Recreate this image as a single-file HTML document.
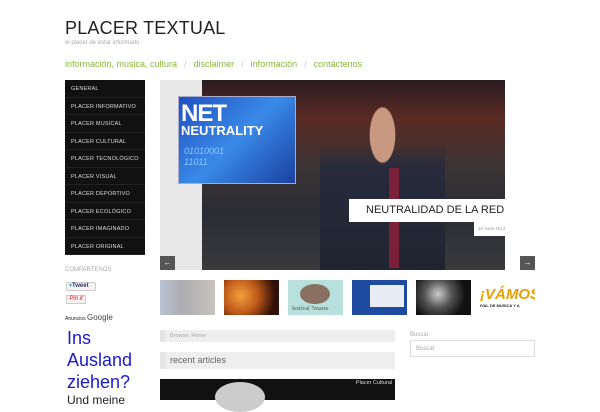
<!DOCTYPE html>
<html><head><meta charset="utf-8"><style>
*{margin:0;padding:0;box-sizing:border-box}
body{width:600px;height:400px;overflow:hidden;background:#fff;font-family:"Liberation Sans","DejaVu Sans",sans-serif;position:relative}
.a{position:absolute;white-space:nowrap}
#title{left:65px;top:18px;font-size:18px;color:#222;letter-spacing:0.2px}
#tag{left:65px;top:40px;font-size:6px;color:#aaa}
#nav{left:65px;top:59px;font-size:9px;color:#8ab83c;white-space:nowrap}
#nav span{color:#ccc;margin:0 7px}
#menu{left:65px;top:80px;width:80px;height:175px;background:#111}
#menu div{height:17.5px;border-bottom:1px solid #222;color:#ddd;font-size:5.5px;padding:6px 0 0 6px;letter-spacing:.2px}
.thumb{top:280px;width:55px;height:35px}
</style></head><body>
<div class="a" id="title">PLACER TEXTUAL</div>
<div class="a" id="tag">el placer de estar informado</div>
<div class="a" id="nav">información, musica, cultura<span>/</span>disclaimer<span>/</span>información<span>/</span>contáctenos</div>
<div class="a" id="menu"><div>GENERAL</div><div>PLACER INFORMATIVO</div><div>PLACER MUSICAL</div><div>PLACER CULTURAL</div><div>PLACER TECNOLÓGICO</div><div>PLACER VISUAL</div><div>PLACER DEPORTIVO</div><div>PLACER ECOLÓGICO</div><div>PLACER IMAGINADO</div><div>PLACER ORIGINAL</div></div>
<div class="a" style="left:65px;top:267px;font-size:6px;color:#aaa">COMPARTENOS</div>
<div class="a" style="left:66px;top:282px;width:30px;height:9px;border:1px solid #ccc;border-radius:2px;background:#f4f4f4;font-size:6px;font-weight:bold;color:#336;padding-left:2px;line-height:7px"><span style="color:#3a9ee0">▾</span>Tweet</div>
<div class="a" style="left:66px;top:295px;width:20px;height:9px;border:1px solid #ccc;background:#f6f0f0;font-size:6px;color:#c22;font-style:italic;text-align:center;line-height:7px">Pin it</div>
<div class="a" style="left:65px;top:313px;font-size:5px;color:#222">Anuncios <span style="font-size:8px;color:#444">Google</span></div>
<div class="a" style="left:67px;top:327px;font-size:18px;line-height:22px;color:#1a1ad0">Ins<br>Ausland<br>ziehen?</div>
<div class="a" style="left:67px;top:393px;font-size:12px;color:#222">Und meine</div>
<!-- slider -->
<div class="a" style="left:160px;top:80px;width:345px;height:190px;background:linear-gradient(180deg,#2a1c20 0%,#5a2a24 20%,#3c3434 45%,#2a2c34 70%,#3a3a3c 100%)"></div>
<div class="a" style="left:160px;top:80px;width:42px;height:190px;background:#e8e8e8"></div>
<div class="a" style="left:320px;top:90px;width:125px;height:180px;background:radial-gradient(ellipse at 50% 25%,#c99880 0 14%,transparent 15%),linear-gradient(180deg,transparent 30%,#262a3c 45%,#202430 100%);border-radius:40px 40px 0 0"></div>
<div class="a" style="left:389px;top:168px;width:10px;height:100px;background:#7a2038"></div>
<div class="a" style="left:178px;top:96px;width:118px;height:88px;background:linear-gradient(135deg,#2050c0,#3a8ae8 50%,#1a40a0);border:1px solid #aac"></div>
<div class="a" style="left:181px;top:100px;font-size:24px;font-weight:bold;color:#fff;letter-spacing:-1px">NET</div>
<div class="a" style="left:181px;top:123px;font-size:13px;font-weight:bold;color:#fff">NEUTRALITY</div>
<div class="a" style="left:184px;top:146px;font-size:9px;color:#8cc8ff;line-height:11px;font-style:italic">01010001<br>11011</div>
<div class="a" style="left:349px;top:199px;width:156px;height:23px;background:#fff;font-size:11px;color:#222;padding:5px 0 0 17px;overflow:hidden">NEUTRALIDAD DE LA RED</div>
<div class="a" style="left:474px;top:222px;width:31px;height:14px;background:#fff;font-size:4.5px;color:#999;padding:4px 0 0 4px;overflow:hidden">10 June 2014</div>
<div class="a" style="left:160px;top:256px;width:15px;height:14px;background:#555;color:#fff;font-size:8px;text-align:center;line-height:14px">←</div>
<div class="a" style="left:520px;top:256px;width:15px;height:14px;background:#555;color:#fff;font-size:8px;text-align:center;line-height:14px">→</div>
<!-- thumbs -->
<div class="a thumb" style="left:160px;background:linear-gradient(90deg,#9aa8c0,#8a8a90 40%,#b0a8a0);opacity:.7"></div>
<div class="a thumb" style="left:224px;background:radial-gradient(circle at 30% 45%,#f0a040,#c05a18 40%,#301008 80%)"></div>
<div class="a thumb" style="left:288px;background:#b8e0dc"><div style="position:absolute;left:12px;top:4px;width:30px;height:20px;background:#8a7060;border-radius:50%"></div><div style="position:absolute;left:4px;top:26px;font-size:6px;color:#553;font-family:'Liberation Serif',serif">festival 7mares</div></div>
<div class="a thumb" style="left:352px;background:#1e4aa0"><div style="position:absolute;left:18px;top:5px;width:34px;height:22px;background:#e8ecf4"></div></div>
<div class="a thumb" style="left:416px;background:radial-gradient(circle at 40% 40%,#ccc,#555 35%,#111 70%)"></div>
<div class="a thumb" style="left:480px;background:#fff;overflow:hidden"><div style="font-size:15px;font-weight:bold;color:#e8a000;font-style:italic;margin-top:6px;white-space:nowrap">¡VÁMOS</div><div style="font-size:4px;font-weight:bold;color:#222;white-space:nowrap">IVAL DE MUSICA Y A</div></div>
<!-- content -->
<div class="a" style="left:160px;top:330px;width:235px;height:12px;background:#eee;border-left:5px solid #e4e4e4;font-size:5.5px;color:#aaa;padding:3px 0 0 5px">Browse: Home</div>
<div class="a" style="left:160px;top:352px;width:235px;height:17px;background:#eee;border-left:5px solid #e4e4e4;font-size:9px;color:#666;padding:3px 0 0 5px">recent articles</div>
<div class="a" style="left:160px;top:379px;width:235px;height:21px;background:#111"><div style="position:absolute;left:55px;top:3px;width:50px;height:30px;background:#ccc;border-radius:50%"></div><div style="position:absolute;right:3px;top:1px;font-size:5.5px;color:#ddd">Placer Cultural</div></div>
<div class="a" style="left:410px;top:332px;font-size:6px;color:#aaa">Buscar</div>
<div class="a" style="left:410px;top:340px;width:125px;height:17px;border:1px solid #ddd;font-size:6px;color:#aaa;padding:5px 0 0 5px">Buscar</div>
</body></html>
